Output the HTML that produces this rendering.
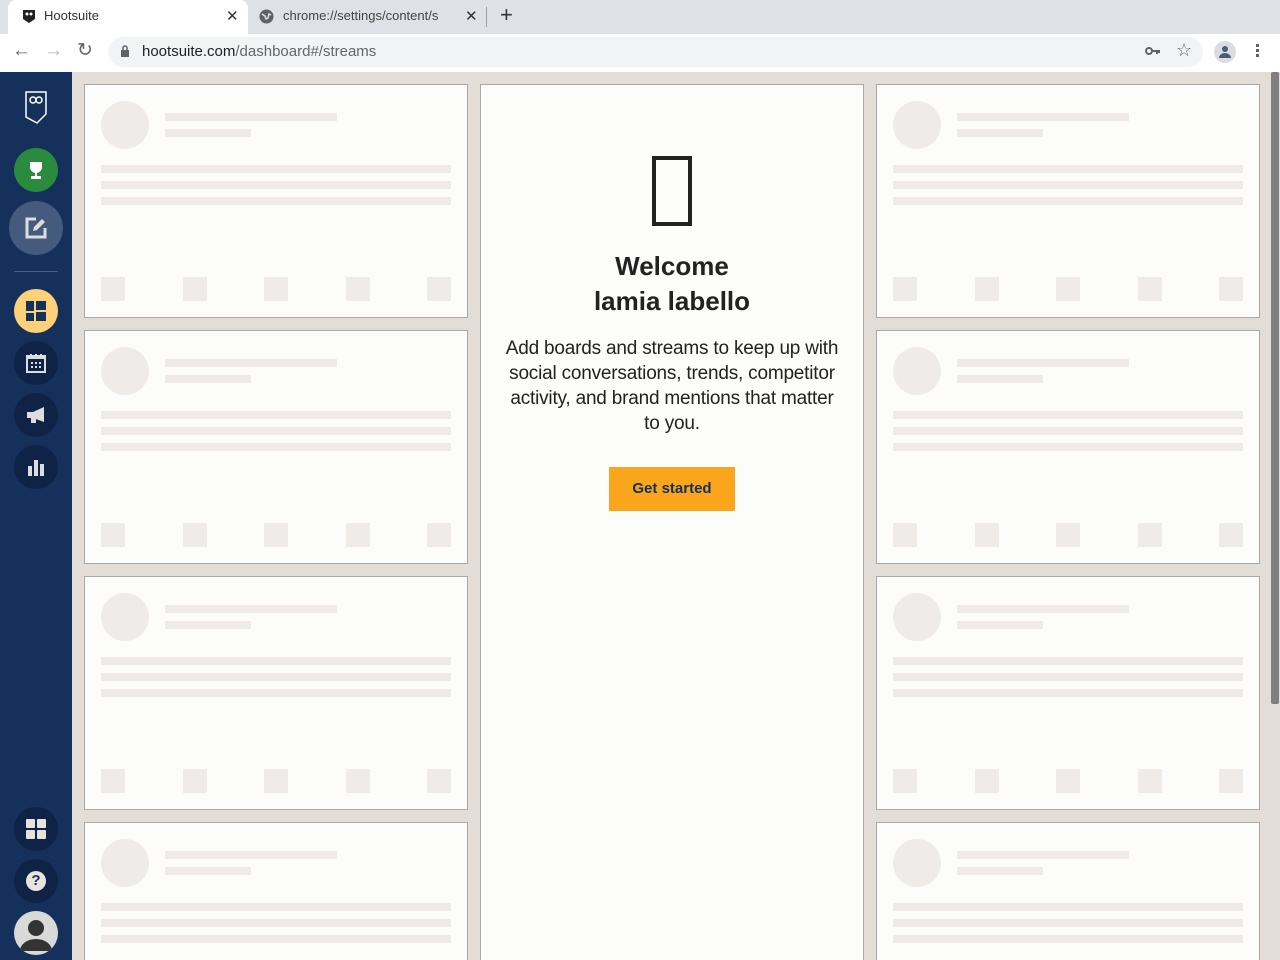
<!DOCTYPE html>
<html style="height:960px;overflow:hidden"><head><meta charset="utf-8"><style>
*{box-sizing:border-box;margin:0;padding:0}
body{width:1280px;height:960px;overflow:hidden;font-family:"Liberation Sans",sans-serif;background:#e2ddd7;position:relative}
#wrap{position:absolute;left:0;top:0;width:1280px;height:960px;overflow:hidden;background:#e2ddd7}
.abs{position:absolute}
.tabbar{left:0;top:0;width:1280px;height:34px;background:#dee1e6}
.tab{left:8px;top:0;width:240px;height:34px;background:#fff;border-radius:8px 8px 0 0}
.toolbar{left:0;top:34px;width:1280px;height:38px;background:#fff}
.omni{left:108px;top:37px;width:1095px;height:30px;background:#f1f3f4;border-radius:15px}
.side{left:0;top:72px;width:72px;height:888px;background:#15305a}
.circ{position:absolute;border-radius:50%;display:flex;align-items:center;justify-content:center}
.card{position:absolute;width:384px;height:234px;background:#fcfcfb;border:1px solid #aaa9a7}
.card div{position:absolute;background:#efebe8}
.center{left:480px;top:84px;width:384px;height:900px;background:#fcfcfb;border:1px solid #aaa9a7}
</style></head><body><div id="wrap">
<div class="abs tabbar"></div>
<div class="abs tab"></div>
<svg class="abs" style="left:22px;top:9px" width="14" height="15" viewBox="0 0 14 15"><path d="M1 1h12v9l-6 4-6-4z" fill="#222"/><circle cx="5" cy="5" r="1.5" fill="#fff"/><circle cx="9" cy="5" r="1.5" fill="#fff"/></svg>
<div class="abs" style="left:44px;top:8px;font-size:13px;color:#333">Hootsuite</div>
<div class="abs" style="left:226px;top:7px;font-size:15px;color:#333">✕</div>
<svg class="abs" style="left:259px;top:9px" width="15" height="15"><circle cx="7.5" cy="7.5" r="7" fill="#5f6368"/><path d="M3 5l3 2 1 3 2-1 1-4 2 1" stroke="#dee1e6" stroke-width="1.5" fill="none"/></svg>
<div class="abs" style="left:283px;top:8px;font-size:13px;color:#444;width:175px;overflow:hidden;white-space:nowrap">chrome://settings/content/s</div>
<div class="abs" style="left:465px;top:7px;font-size:15px;color:#333">✕</div>
<div class="abs" style="left:486px;top:7px;width:1px;height:20px;background:#9aa0a6"></div>
<div class="abs" style="left:500px;top:2px;font-size:22px;color:#333">+</div>
<div class="abs toolbar"></div>
<div class="abs" style="left:12px;top:40px;font-size:19px;color:#5f6368">←</div>
<div class="abs" style="left:44px;top:40px;font-size:19px;color:#bbb">→</div>
<div class="abs" style="left:77px;top:39px;font-size:19px;color:#5f6368">↻</div>
<div class="abs omni"></div>
<svg class="abs" style="left:120px;top:45px" width="10" height="13"><rect x="1" y="5" width="8" height="7" fill="#5f6368"/><path d="M3 5V3a2 2 0 014 0v2" stroke="#5f6368" stroke-width="1.5" fill="none"/></svg>
<div class="abs" style="left:142px;top:43px;font-size:15px;color:#202124">hootsuite.com<span style="color:#666">/dashboard#/streams</span></div>
<svg class="abs" style="left:1145px;top:46px" width="16" height="10"><circle cx="4" cy="5" r="3" stroke="#5f6368" stroke-width="2" fill="none"/><path d="M7 5h8M12 5v3M14 5v2" stroke="#5f6368" stroke-width="2"/></svg>
<div class="abs" style="left:1176px;top:40px;font-size:18px;color:#5f6368">☆</div>
<div class="circ" style="left:1214px;top:41px;width:22px;height:22px;background:#dadce0"><svg width="14" height="14"><circle cx="7" cy="4" r="3" fill="#4a5a78"/><path d="M1 13a6 5 0 0112 0z" fill="#4a5a78"/></svg></div>
<div class="abs" style="left:1256px;top:44px;width:3px;height:3px;background:#5f6368;box-shadow:0 5px #5f6368,0 10px #5f6368"></div>

<div class="abs side"></div>
<svg class="abs" style="left:24px;top:91px" width="24" height="34" viewBox="0 0 24 34"><path d="M2 1h20v22L13 32 2 26z" fill="none" stroke="#fff" stroke-width="1.5"/><circle cx="9" cy="9" r="3" fill="none" stroke="#fff" stroke-width="1.5"/><circle cx="15" cy="9" r="3" fill="none" stroke="#fff" stroke-width="1.5"/></svg>
<div class="circ" style="left:14px;top:148px;width:44px;height:44px;background:#2a8a3e"><svg width="20" height="20"><path d="M4 2h12v5a6 6 0 01-12 0z" fill="#fff"/><rect x="9" y="12" width="2" height="4" fill="#fff"/><rect x="5" y="16" width="10" height="3" fill="#fff"/></svg></div>
<div class="circ" style="left:9px;top:201px;width:54px;height:54px;background:#445b7d"><svg width="22" height="22"><path d="M11 2H2v18h18v-9" stroke="#ddd" stroke-width="3" fill="none"/><path d="M8 14l1-4 8-8 3 3-8 8z" fill="#ddd"/></svg></div>
<div class="abs" style="left:14px;top:271px;width:44px;height:1px;background:#4a6080"></div>
<div class="circ" style="left:14px;top:289px;width:44px;height:44px;background:#fdd07a"><svg width="20" height="20"><rect x="0" y="0" width="8" height="10" fill="#15305a"/><rect x="0" y="12" width="8" height="8" fill="#15305a"/><rect x="10" y="0" width="10" height="20" fill="#15305a"/><rect x="10" y="9" width="10" height="2" fill="#fdd07a"/></svg></div>
<div class="circ" style="left:14px;top:341px;width:44px;height:44px;background:#0f2346"><svg width="20" height="20"><rect x="1" y="3" width="18" height="16" fill="none" stroke="#ddd" stroke-width="2"/><rect x="1" y="3" width="18" height="3" fill="#ddd"/><path d="M5 1v3M10 1v3M15 1v3" stroke="#ddd" stroke-width="2"/><g fill="#ddd"><rect x="5" y="9" width="2" height="2"/><rect x="9" y="9" width="2" height="2"/><rect x="13" y="9" width="2" height="2"/><rect x="5" y="13" width="2" height="2"/><rect x="9" y="13" width="2" height="2"/><rect x="13" y="13" width="2" height="2"/></g></svg></div>
<div class="circ" style="left:14px;top:393px;width:44px;height:44px;background:#0f2346"><svg width="20" height="20"><path d="M1 7h6l11-5v15L7 13H1z" fill="#ddd"/><rect x="5" y="13" width="5" height="5" fill="#ddd"/></svg></div>
<div class="circ" style="left:14px;top:445px;width:44px;height:44px;background:#0f2346"><svg width="18" height="18"><rect x="1" y="8" width="4" height="10" fill="#ddd"/><rect x="7" y="2" width="4" height="16" fill="#ddd"/><rect x="13" y="6" width="4" height="12" fill="#ddd"/></svg></div>
<div class="circ" style="left:14px;top:807px;width:44px;height:44px;background:#0f2346"><svg width="20" height="20"><rect x="0" y="0" width="9" height="9" rx="1" fill="#e8e3dc"/><rect x="11" y="0" width="9" height="9" rx="1" fill="#e8e3dc"/><rect x="0" y="11" width="9" height="9" rx="1" fill="#e8e3dc"/><rect x="11" y="11" width="9" height="9" rx="1" fill="#e8e3dc"/></svg></div>
<div class="circ" style="left:14px;top:859px;width:44px;height:44px;background:#0f2346"><div style="width:20px;height:20px;border-radius:50%;background:#e8e3dc;color:#15305a;font-weight:bold;font-size:15px;text-align:center;line-height:20px">?</div></div>
<div class="circ" style="left:14px;top:911px;width:44px;height:44px;background:#d9d9d9;overflow:hidden"><svg width="44" height="44"><circle cx="22" cy="17" r="8" fill="#333"/><path d="M6 40a16 12 0 0132 0z" fill="#333"/></svg></div>

<div id="cards"></div>
<div class="abs center"></div>
<div class="abs" style="left:652px;top:156px;width:40px;height:70px;border:4px solid #222"></div>
<div class="abs" style="left:480px;top:249px;width:384px;text-align:center;font-size:26px;font-weight:bold;line-height:35px;color:#222">Welcome<br>lamia labello</div>
<div class="abs" style="left:480px;top:336px;width:384px;text-align:center;font-size:19px;line-height:25px;color:#222;white-space:nowrap;letter-spacing:-0.2px">Add boards and streams to keep up with<br>social conversations, trends, competitor<br>activity, and brand mentions that matter<br>to you.</div>
<div class="abs" style="left:609px;top:467px;width:126px;height:44px;background:#f9a61c;color:#15305a;font-weight:bold;font-size:15px;text-align:center;line-height:44px">Get started</div>
<div class="abs" style="left:1271px;top:72px;width:8px;height:632px;background:#7f7f7f;border-radius:2px"></div>
</div>
<script>
var h='';
[84,876].forEach(function(x){for(var i=0;i<4;i++){var y=84+246*i;
h+='<div class="card" style="left:'+x+'px;top:'+y+'px"><div style="left:16px;top:16px;width:48px;height:48px;border-radius:50%"></div><div style="left:80px;top:28px;width:172px;height:8px"></div><div style="left:80px;top:44px;width:86px;height:8px"></div><div style="left:16px;top:80px;width:350px;height:8px"></div><div style="left:16px;top:96px;width:350px;height:8px"></div><div style="left:16px;top:112px;width:350px;height:8px"></div>';
[16,98,179,261,342].forEach(function(s){h+='<div style="left:'+s+'px;top:192px;width:24px;height:24px"></div>'});
h+='</div>';}});
document.getElementById('cards').innerHTML=h;
</script>
</body></html>
